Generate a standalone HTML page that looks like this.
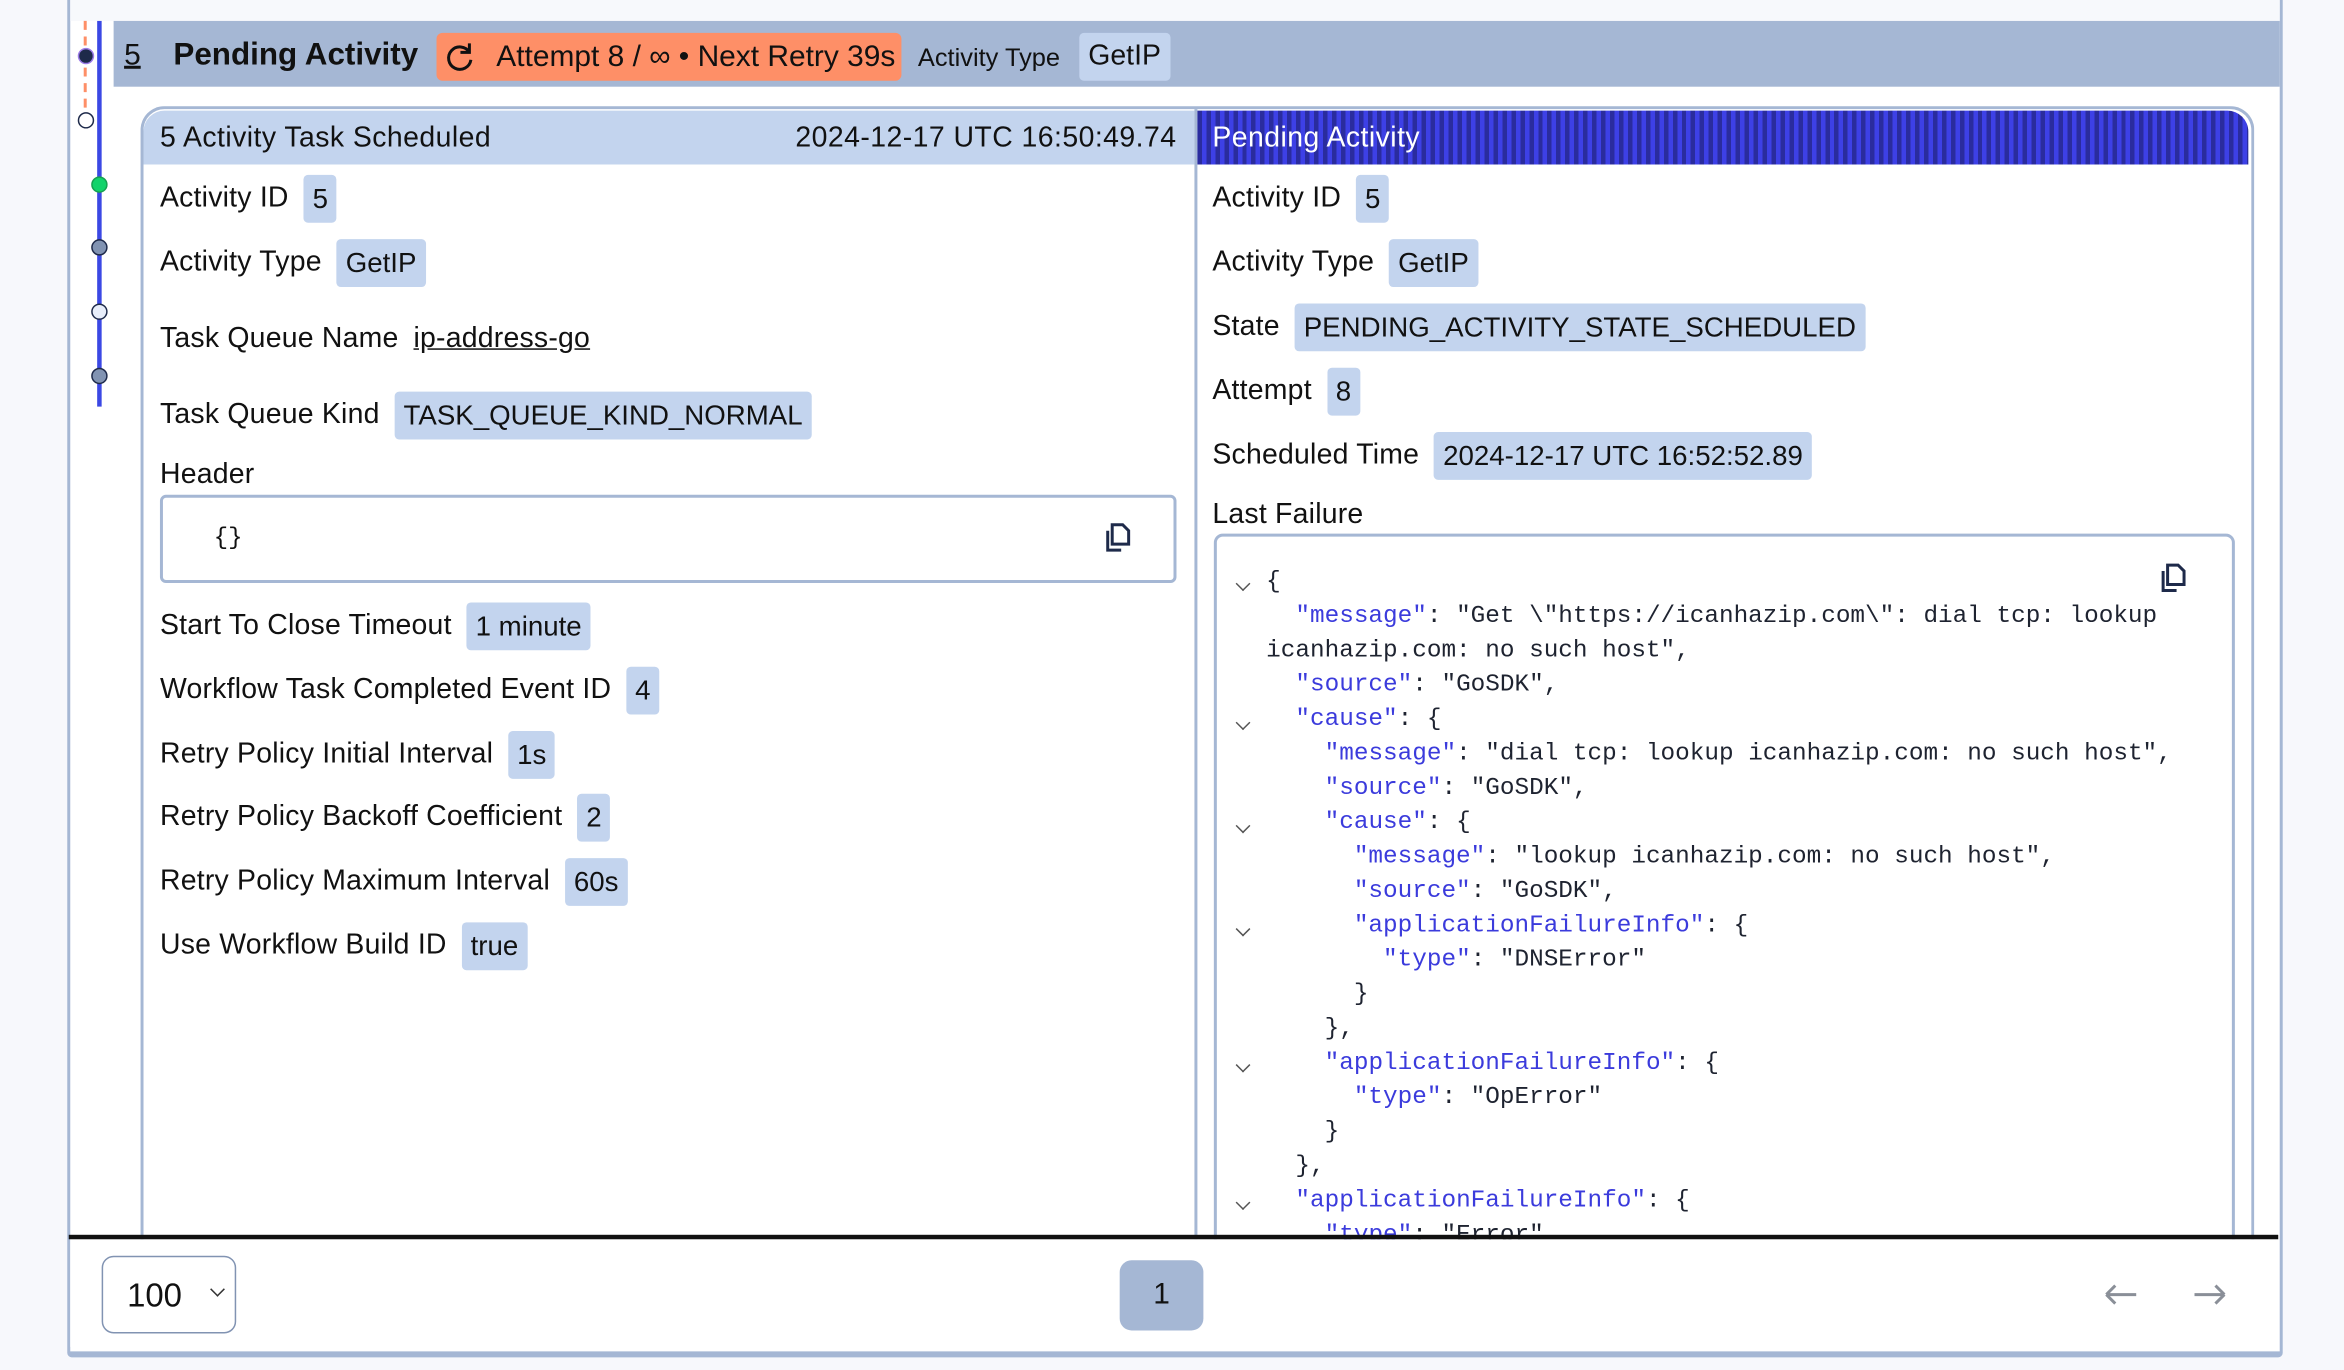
<!DOCTYPE html>
<html><head><meta charset="utf-8"><style>
html,body{margin:0;padding:0;background:#f7f8fc;overflow:hidden}
#s{position:absolute;left:0;top:0;width:1568px;height:916px;transform:scale(1.49490);transform-origin:0 0;font-family:"Liberation Sans",sans-serif;color:#111;}
.a{position:absolute;white-space:nowrap}
.r{position:absolute;display:flex;align-items:center;gap:10px;height:32px;font-size:19px;letter-spacing:0.15px;white-space:nowrap;margin-top:1px}
.r .b{background:#c3d4ee;border-radius:3px;height:32px;line-height:32px;padding:0 6px;font-size:18.5px;letter-spacing:0}
.dot{position:absolute;width:9px;height:9px;border-radius:50%;border:1.5px solid #1e2a4a}
.code{position:absolute;font-family:"Liberation Mono",monospace;font-size:16.3px;line-height:23px;white-space:pre;color:#1e2330}
.k{color:#3b3bdc}
.chev{position:absolute;left:828px;width:6px;height:6px;border-right:1.3px solid #555;border-bottom:1.3px solid #555;transform:rotate(45deg)}
</style></head><body><div id="s">
<div class="a" style="left:45px;top:-4px;width:1478px;height:906px;border:2px solid #a5b7d4;border-bottom:4px solid #a5b7d4;background:#fff;border-radius:0 0 3px 3px"></div>
<div class="a" style="left:47px;top:0;width:1478px;height:14px;background:#f7f9fc"></div>
<div class="a" style="left:76px;top:14px;width:1449px;height:44px;background:#a5b7d4"></div>
<div class="a" style="left:83px;top:26px;font-size:20px;text-decoration:underline">5</div>
<div class="a" style="left:116px;top:25px;font-size:21px;font-weight:bold">Pending Activity</div>
<div class="a" style="left:292px;top:22px;width:311px;height:32px;background:#fe8f67;border-radius:4px"></div>
<svg class="a" style="left:297px;top:27px" width="22" height="22" viewBox="0 0 22 22"><path d="M17 8 A7.5 7.5 0 1 0 18 13" fill="none" stroke="#111" stroke-width="2"/><path d="M17 2 V8 H11" fill="none" stroke="#111" stroke-width="2"/></svg>
<div class="a" style="left:332px;top:27px;font-size:20px">Attempt 8 / ∞ • Next Retry 39s</div>
<div class="a" style="left:614px;top:29px;font-size:17px">Activity Type</div>
<div class="a" style="left:722px;top:22px;height:32px;line-height:32px;padding:0 6px;background:#c3d4ee;border-radius:3px;font-size:19px">GetIP</div>
<div class="a" style="left:56px;top:14px;height:58px;border-left:2px dashed #fe8f67"></div>
<div class="a" style="left:65px;top:14px;width:3px;height:258px;background:#3b48e4"></div>
<div class="dot" style="left:52px;top:32px;background:#1e2a4a;border-color:#9b7be8"></div>
<div class="dot" style="left:52px;top:75px;background:#fff"></div>
<div class="dot" style="left:61px;top:118px;background:#12d36a;border-color:#16a050"></div>
<div class="dot" style="left:61px;top:160px;background:#8193b2"></div>
<div class="dot" style="left:61px;top:203px;background:#e8eefa"></div>
<div class="dot" style="left:61px;top:246px;background:#8193b2"></div>
<div class="a" style="left:94px;top:71px;width:1410px;height:770px;border:2px solid #a5b7d4;border-radius:16px 16px 0 0;border-bottom:none"></div>
<div class="a" style="left:96px;top:74px;width:703px;height:36px;background:#c3d4ee;border-radius:14px 0 0 0"></div>
<div class="a" style="left:799px;top:73px;width:2px;height:756px;background:#a5b7d4"></div>
<div class="a" style="left:801px;top:74px;width:703px;height:36px;border-radius:0 14px 0 0;background:repeating-linear-gradient(90deg,#2a2c9e 0 3px,#3d40e6 3px 6px)"></div>
<div class="a" style="left:107px;top:82px;font-size:19px;letter-spacing:0.3px">5 Activity Task Scheduled</div>
<div class="a" style="right:781px;top:82px;font-size:19px;letter-spacing:0.3px">2024-12-17 UTC 16:50:49.74</div>
<div class="a" style="left:811px;top:82px;font-size:19px;letter-spacing:0.3px;color:#fff">Pending Activity</div>
<div class="r" style="left:107px;top:116px"><span>Activity ID</span><span class="b">5</span></div>
<div class="r" style="left:107px;top:159px"><span>Activity Type</span><span class="b">GetIP</span></div>
<div class="r" style="left:107px;top:210px"><span>Task Queue Name</span><span style="text-decoration:underline">ip-address-go</span></div>
<div class="r" style="left:107px;top:261px"><span>Task Queue Kind</span><span class="b">TASK_QUEUE_KIND_NORMAL</span></div>
<div class="r" style="left:107px;top:301px"><span>Header</span></div>
<div class="a" style="left:107px;top:331px;width:676px;height:55px;border:2px solid #a5b7d4;border-radius:4px"></div>
<div class="a" style="left:143px;top:351px;font-family:'Liberation Mono',monospace;font-size:16px">{}</div>
<svg class="a" style="left:737px;top:348px" width="22" height="22" viewBox="0 0 22 22"><path d="M7 3 H14 L18 7 V16 H7 Z" fill="none" stroke="#1e2a4a" stroke-width="2"/><path d="M4 7 V20 H13" fill="none" stroke="#1e2a4a" stroke-width="2"/></svg>
<div class="r" style="left:107px;top:402px"><span>Start To Close Timeout</span><span class="b">1 minute</span></div>
<div class="r" style="left:107px;top:445px"><span>Workflow Task Completed Event ID</span><span class="b">4</span></div>
<div class="r" style="left:107px;top:488px"><span>Retry Policy Initial Interval</span><span class="b">1s</span></div>
<div class="r" style="left:107px;top:530px"><span>Retry Policy Backoff Coefficient</span><span class="b">2</span></div>
<div class="r" style="left:107px;top:573px"><span>Retry Policy Maximum Interval</span><span class="b">60s</span></div>
<div class="r" style="left:107px;top:616px"><span>Use Workflow Build ID</span><span class="b">true</span></div>
<div class="r" style="left:811px;top:116px"><span>Activity ID</span><span class="b">5</span></div>
<div class="r" style="left:811px;top:159px"><span>Activity Type</span><span class="b">GetIP</span></div>
<div class="r" style="left:811px;top:202px"><span>State</span><span class="b">PENDING_ACTIVITY_STATE_SCHEDULED</span></div>
<div class="r" style="left:811px;top:245px"><span>Attempt</span><span class="b">8</span></div>
<div class="r" style="left:811px;top:288px"><span>Scheduled Time</span><span class="b">2024-12-17 UTC 16:52:52.89</span></div>
<div class="r" style="left:811px;top:328px"><span>Last Failure</span></div>
<div class="a" style="left:812px;top:357px;width:679px;height:480px;border:2px solid #a5b7d4;border-radius:6px"></div>
<svg class="a" style="left:1443px;top:375px" width="22" height="22" viewBox="0 0 22 22"><path d="M7 3 H14 L18 7 V16 H7 Z" fill="none" stroke="#1e2a4a" stroke-width="2"/><path d="M4 7 V20 H13" fill="none" stroke="#1e2a4a" stroke-width="2"/></svg>
<div class="code" style="left:847px;top:377px">{
  <span class="k">"message"</span>: "Get \"https://icanhazip.com\": dial tcp: lookup
icanhazip.com: no such host",
  <span class="k">"source"</span>: "GoSDK",
  <span class="k">"cause"</span>: {
    <span class="k">"message"</span>: "dial tcp: lookup icanhazip.com: no such host",
    <span class="k">"source"</span>: "GoSDK",
    <span class="k">"cause"</span>: {
      <span class="k">"message"</span>: "lookup icanhazip.com: no such host",
      <span class="k">"source"</span>: "GoSDK",
      <span class="k">"applicationFailureInfo"</span>: {
        <span class="k">"type"</span>: "DNSError"
      }
    },
    <span class="k">"applicationFailureInfo"</span>: {
      <span class="k">"type"</span>: "OpError"
    }
  },
  <span class="k">"applicationFailureInfo"</span>: {
    <span class="k">"type"</span>: "Error"</div>
<div class="chev" style="top:387px"></div>
<div class="chev" style="top:480px"></div>
<div class="chev" style="top:549px"></div>
<div class="chev" style="top:618px"></div>
<div class="chev" style="top:709px"></div>
<div class="chev" style="top:801px"></div>
<div class="a" style="left:47px;top:829px;width:1476px;height:72px;background:#fff"></div>
<div class="a" style="left:46px;top:826px;width:1478px;height:3px;background:#111"></div>
<div class="a" style="left:68px;top:840px;width:88px;height:50px;border:1.5px solid #8193b2;border-radius:8px"></div>
<div class="a" style="left:85px;top:854px;font-size:22px">100</div>
<div class="a" style="left:142px;top:859px;width:6px;height:6px;border-right:1.3px solid #333;border-bottom:1.3px solid #333;transform:rotate(45deg)"></div>
<div class="a" style="left:749px;top:843px;width:56px;height:47px;background:#a5b7d4;border-radius:8px;text-align:center;line-height:47px;font-size:20px">1</div>
<svg class="a" style="left:1407px;top:856px" width="84" height="20" viewBox="0 0 84 20"><path d="M2 10 H22 M2 10 L8 4 M2 10 L8 16" fill="none" stroke="#8a8f98" stroke-width="2"/><path d="M61 10 H81 M81 10 L75 4 M81 10 L75 16" fill="none" stroke="#8a8f98" stroke-width="2"/></svg>
</div></body></html>
